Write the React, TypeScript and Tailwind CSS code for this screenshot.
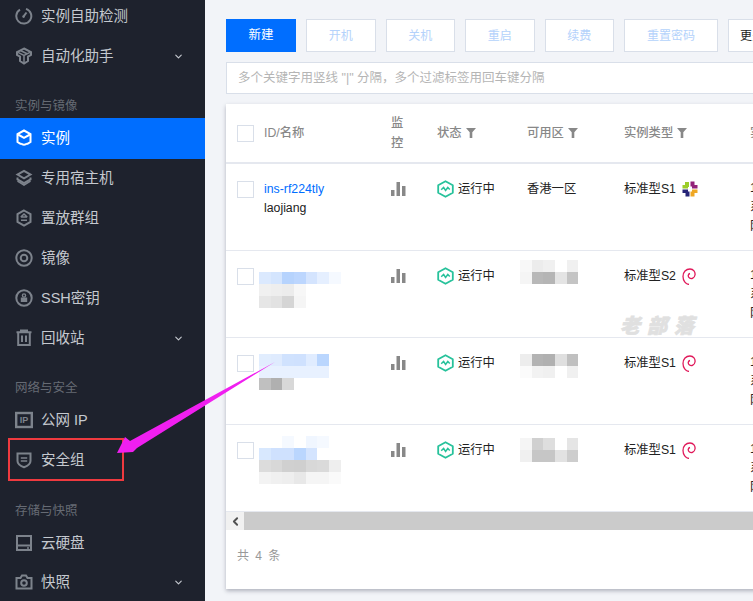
import React from "react";
import { ChevronDown, ChevronLeft } from "lucide-react";

const S = ({ children }: { children: React.ReactNode }) => (
  <svg width="18" height="18" viewBox="0 0 18 18" fill="none" stroke="currentColor" strokeWidth="2" className="shrink-0">
    {children}
  </svg>
);

const icons: Record<string, React.ReactNode> = {
  check: <S><path d="M11 1.900A7.500 7.500 0 1 1 5 2.600" /><path d="M11.500 5.500 8.800 9.200" /><circle cx="8.600" cy="9.600" r="1.300" fill="currentColor" stroke="none" /></S>,
  auto: <S><path d="M9 1.500 16 5v3l-3 1.500V14l-4 2.500L5 14V9.500L2 8V5z" /><path d="M2.500 5.200 9 8.500l6.500-3.300M9 8.500v7M5.500 3.500l7 3.500" strokeWidth="1.500" /></S>,
  ins: <S><path d="M6 15.200 2.500 13V5L9 1.500 15.500 5v8L12 15.200" /><path d="M3 5.500 9 8.800l6-3.300" /><path d="M6 14.300c1.500 1.900 4.500 1.900 6 0" /></S>,
  host: <S><path d="M9 1.800 15.500 5.600 9 9.400 2.500 5.600z" /><path d="M2.500 8.600v1.800L9 14.200l6.500-3.800V8.600" /><path d="M2.500 12 9 16l6.500-4" strokeWidth="1.500" /></S>,
  group: <S><path d="M9 1.500 15.500 5.200v7.600L9 16.500l-6.500-3.700V5.200z" /><path d="M5.800 8h6.400M5.800 8 9 5l3.200 3M6 11.300h6" strokeWidth="1.600" /></S>,
  image: <S><circle cx="9" cy="9" r="7.700" /><circle cx="9" cy="9" r="3.300" /></S>,
  ssh: <S><circle cx="9" cy="9" r="7.700" /><circle cx="9" cy="6.500" r="1.600" strokeWidth="1.400" /><rect x="5.800" y="8.500" width="6.400" height="4.500" fill="currentColor" stroke="none" /></S>,
  trash: <S><path d="M1.500 3.200h15M5 1.500h8M3.200 3.500v12.500h11.600V3.500M7 6.500V13M11 6.500V13" /></S>,
  ip: <svg width="18" height="18" viewBox="0 0 18 18" className="shrink-0"><rect x="1.200" y="2" width="15.600" height="14" fill="none" stroke="currentColor" strokeWidth="2.400" /><text x="9" y="12.400" textAnchor="middle" fontSize="9" fontWeight="700" fill="currentColor" fontFamily="Liberation Sans">IP</text></svg>,
  shield: <S><path d="M2.500 2.500h13V10c0 3-3 5-6.500 6.300C5.500 15 2.500 13 2.500 10z" /><path d="M5.800 7h6.400M5.800 10h6.400" strokeWidth="1.500" /></S>,
  disk: <S><rect x="2" y="2" width="14" height="14" /><path d="M2 11.500h14" /><path d="M12 14h2" strokeWidth="1.500" /></S>,
  camera: <S><path d="M1.500 5h4l1.500-2.500h4L12.500 5h4v10.500h-15z" /><circle cx="9" cy="10" r="2.800" /></S>,
};

type NavItem = { t: string; i: string; arrow?: boolean; active?: boolean };

function Item({ t, i, arrow, active }: NavItem) {
  return (
    <div className={active ? "-mb-px flex h-[41px] items-center bg-[#006eff] pb-px pl-[15px] pr-[21px] text-white" : "flex h-[40px] items-center pl-[15px] pr-[21px] text-[#c5c9cf]"}>
      <span className={active ? "text-white" : "text-[#7d838c]"}>{icons[i]}</span>
      <span className="ml-[8px] flex-1 text-[14.5px] leading-none">{t}</span>
      {arrow && <ChevronDown size={11} strokeWidth={2.5} className="text-[#c5c9cf]" />}
    </div>
  );
}

function Label({ t, h }: { t: string; h: string }) {
  return <div className={`flex items-end pb-[3px] pl-[15px] text-[12.5px] leading-[18px] text-[#666b74] ${h}`}>{t}</div>;
}

const Bars = () => (
  <svg width="15" height="14" viewBox="0 0 15 14" fill="#888888"><rect x="0" y="8" width="3.500" height="6" /><rect x="5.500" y="0" width="3.500" height="14" /><rect x="11" y="4" width="3.500" height="10" /></svg>
);

const Hex = () => (
  <svg width="17" height="18" viewBox="0 0 17 18" fill="none" className="shrink-0">
    <path d="M8.500 1.200 15.800 5.200v7.600L8.500 16.800 1.200 12.800V5.200z" stroke="#27c29b" strokeWidth="1.800" strokeLinejoin="round" />
    <path d="M4.200 9.800 6.600 7.500l2 3 2.200-3 2 2" stroke="#27c29b" strokeWidth="1.500" />
  </svg>
);

const Debian = () => (
  <svg width="14" height="17" viewBox="0 0 14 17" fill="none" stroke="#e0195a" strokeWidth="1.300" className="shrink-0">
    <path d="M7 16.500C3.500 16 1 12.500 1 8.500 1 4 4 1 8 1c3.500 0 5.500 3 5 6-.5 3-3.500 4.500-5.500 3-2-1.500-1.500-4 .5-4.500" />
  </svg>
);

const Centos = () => (
  <svg width="16" height="16" viewBox="0 0 16 16" className="shrink-0">
    <rect x="3" y="1" width="4" height="5" fill="#9ccd2a" />
    <rect x="8.500" y="0.500" width="4" height="5" fill="#932279" />
    <rect x="10" y="4" width="5.500" height="3.500" fill="#932279" />
    <rect x="10" y="8.500" width="5.500" height="3.500" fill="#efa724" />
    <rect x="8.500" y="10.500" width="4" height="5" fill="#efa724" />
    <rect x="3.500" y="10.500" width="4" height="5" fill="#262577" />
    <rect x="0.500" y="8.500" width="5.500" height="3.500" fill="#262577" />
    <rect x="0.500" y="4" width="5.500" height="3.500" fill="#9ccd2a" />
  </svg>
);

const Funnel = () => (
  <svg width="10" height="10" viewBox="0 0 10 10" fill="#888888" className="ml-[4px] shrink-0"><path d="M0 0h10L6.300 4.300V10H3.700V4.300z" /></svg>
);

function Mosaic({ rows, className }: { rows: string[][]; className: string }) {
  return (
    <div className={className}>
      {rows.map((r, i) => (
        <div key={i} className="flex">
          {r.map((c, j) => (
            <div key={j} className="h-[12px] w-[11.700px]" style={{ backgroundColor: c }} />
          ))}
        </div>
      ))}
    </div>
  );
}

const grid = "grid grid-cols-[27px_127px_46px_90px_97px_126px_1fr]";

const Box = ({ className }: { className: string }) => (
  <div className={`h-[17px] w-[17px] border border-[#d9dfe9] bg-white ${className}`} />
);

type RowT = {
  name: React.ReactNode;
  zone: React.ReactNode;
  type: string;
  os: React.ReactNode;
};

const rows: RowT[] = [
  {
    name: (
      <div className="pt-[16px] text-[12.300px] leading-[19px]">
        <div className="text-[#006eff]">ins-rf224tly</div>
        <div className="text-[#222222]">laojiang</div>
      </div>
    ),
    zone: <div className="pt-[15px] leading-[20px]">香港一区</div>,
    type: "标准型S1",
    os: <Centos />,
  },
  {
    name: (
      <Mosaic
        className="-ml-[5px] pt-[21px]"
        rows={[
          ["#dbe9fe", "#d4e5fe", "#b6d3fd", "#bcd6fe", "#d4e4fe", "#e5efff", "#f5f9ff"],
          ["#f0f0f0", "#eeeeee", "#ececec", "#f7f7f7"],
          ["#e6e6e6", "#e2e2e2", "#d5d5d5", "#f5f5f5"],
        ]}
      />
    ),
    zone: (
      <Mosaic
        className="-ml-[7px] pt-[9px]"
        rows={[
          ["#f8f8f8", "#ececec", "#f0f0f0", "#ffffff", "#f0f0f0"],
          ["#f5f5f5", "#b8b8b8", "#b5b5b5", "#e4e4e4", "#c4c4c4"],
        ]}
      />
    ),
    type: "标准型S2",
    os: <Debian />,
  },
  {
    name: (
      <Mosaic
        className="-ml-[5px] pt-[16px]"
        rows={[
          ["#e1edfe", "#dfebfe", "#d0e2fe", "#cfe1fe", "#e0ecff", "#bad6fe"],
          ["#e8f1ff", "#e8f1ff", "#e8f1ff", "#e8f1ff", "#e8f1ff", "#e8f1ff"],
          ["#c0c0c0", "#b0b0b0", "#d8d8d8"],
        ]}
      />
    ),
    zone: (
      <Mosaic
        className="-ml-[7px] pt-[16px]"
        rows={[
          ["#ededed", "#b3b3b3", "#b0b0b0", "#dfdfdf", "#c0c0c0"],
          ["#fbfbfb", "#f2f2f2", "#f0f0f0", "#ffffff", "#f0f0f0"],
        ]}
      />
    ),
    type: "标准型S1",
    os: <Debian />,
  },
  {
    name: (
      <Mosaic
        className="-ml-[5px] pt-[11px]"
        rows={[
          ["#ffffff", "#ffffff", "#f5f9ff", "#ffffff", "#f0f6ff", "#f5f9ff"],
          ["#d8e8fe", "#cfe1fe", "#cfe1fe", "#bad6fe", "#d4e4fe", "#ffffff"],
          ["#dcdcdc", "#d8d8d8", "#d0d0d0", "#cfcfcf", "#d8d8d8", "#dadada", "#eeeeee"],
          ["#f3f3f3", "#f0f0f0", "#eeeeee", "#e8e8e8", "#f5f5f5", "#f5f5f5", "#fafafa"],
        ]}
      />
    ),
    zone: (
      <Mosaic
        className="-ml-[7px] pt-[13px]"
        rows={[
          ["#f5f5f5", "#d0d0d0", "#dedede", "#ffffff", "#e5e5e5"],
          ["#f0f0f0", "#c6c6c6", "#c6c6c6", "#e2e2e2", "#cdcdcd"],
        ]}
      />
    ),
    type: "标准型S1",
    os: <Debian />,
  },
];

const Btn = ({ t, w = "w-[69.500px]" }: { t: string; w?: string }) => (
  <div className={`flex h-[33px] shrink-0 items-center justify-center border border-[#d9dfe9] bg-white text-[12px] text-[#b4d2fb] ${w}`}>{t}</div>
);

export default function App() {
  return (
    <div className="relative flex h-[601px] w-[753px] overflow-hidden font-['Liberation_Sans','Noto_Sans_CJK_SC',sans-serif]">
      <aside className="h-full w-[205px] shrink-0 overflow-hidden bg-[#1e222d]">
        <div className="-mt-[4px]">
          <Item t="实例自助检测" i="check" />
          <Item t="自动化助手" i="auto" arrow />
          <Label t="实例与镜像" h="h-[42px]" />
          <Item t="实例" i="ins" active />
          <Item t="专用宿主机" i="host" />
          <Item t="置放群组" i="group" />
          <Item t="镜像" i="image" />
          <Item t="SSH密钥" i="ssh" />
          <Item t="回收站" i="trash" arrow />
          <Label t="网络与安全" h="h-[42px]" />
          <Item t="公网 IP" i="ip" />
          <Item t="安全组" i="shield" />
          <Label t="存储与快照" h="h-[43px]" />
          <Item t="云硬盘" i="disk" />
          <div className="-mt-px">
            <Item t="快照" i="camera" arrow />
          </div>
        </div>
      </aside>

      <main className="min-w-0 flex-1 overflow-hidden bg-[#f2f4f8] pl-[21px] pt-[19px]">
        <div className="flex w-[640px] gap-[10px]">
          <div className="flex h-[33px] w-[70px] shrink-0 items-center justify-center bg-[#006eff] text-[12.500px] text-white">新建</div>
          <Btn t="开机" />
          <Btn t="关机" />
          <Btn t="重启" />
          <Btn t="续费" />
          <Btn t="重置密码" w="w-[94px]" />
          <div className="flex h-[33px] w-[72px] shrink-0 items-center justify-center border border-[#d9dfe9] bg-white text-[12px] text-[#222222]">更多操作</div>
        </div>
        <div className="mt-[10px] flex h-[32px] w-[640px] items-center border border-[#d9dfe9] bg-white pl-[11px] pt-px text-[12.500px] text-[#b5b5b5]">
          多个关键字用竖线 "|" 分隔，多个过滤标签用回车键分隔
        </div>

        <div className="mt-[10px] h-[485px] w-[640px] bg-white text-[12.300px] text-[#222222] shadow-[0_2px_4px_rgba(54,58,80,0.35)]">
          <div className={`${grid} h-[60px] items-center whitespace-nowrap border-b-2 border-[#e5e8ef] pl-[11px] font-medium text-[#888888]`}>
            <Box className="" />
            <div>ID/名称</div>
            <div className="leading-[20px]">监<br />控</div>
            <div className="flex items-center">状态<Funnel /></div>
            <div className="flex items-center">可用区<Funnel /></div>
            <div className="flex items-center">实例类型<Funnel /></div>
            <div>实例配置</div>
          </div>
          {rows.map((r, i) => (
            <div key={i} className={`${grid} h-[87px] whitespace-nowrap border-b border-[#e5e8ef] pl-[11px]`}>
              <div className="pt-[17px]"><Box className="" /></div>
              <div>{r.name}</div>
              <div className="pt-[18px]"><Bars /></div>
              <div className="flex h-fit items-center gap-[4px] pt-[16px]"><Hex /><span>运行中</span></div>
              <div>{r.zone}</div>
              <div className="flex h-fit items-center gap-[6px] pt-[15px] leading-[20px]"><span>{r.type}</span>{r.os}</div>
              <div className="pt-[15px] leading-[19px]">
                <div>1核 1GB 1Mbps</div>
                <div>系统盘：高性能云硬盘</div>
                <div>网络：Default-VPC</div>
              </div>
            </div>
          ))}
          <div className="flex h-[18px] bg-[#cbcbcb]">
            <div className="flex w-[18px] items-center justify-center bg-[#f1f1f1]">
              <ChevronLeft size={13} strokeWidth={3.500} className="text-[#505050]" />
            </div>
          </div>
          <div className="pl-[11px] pt-[16px] text-[12px] leading-[20px] tracking-[1.500px] text-[#999999]">共 4 条</div>
        </div>
      </main>

      <div className="absolute left-[620px] top-[314px] text-[20px] font-black italic leading-[24px] tracking-[7px] text-[#e0e0e0] [-webkit-text-stroke:0.7px_#e0e0e0]">老部落</div>
      <div className="absolute left-[8px] top-[438px] h-[43px] w-[116px] border-2 border-[#ef3a3f]" />
      <svg className="absolute left-0 top-0" width="753" height="601" fill="#f01ff0">
        <polygon points="275,362 130,441 125,437 117,453 133,452 137,448" />
      </svg>
    </div>
  );
}
